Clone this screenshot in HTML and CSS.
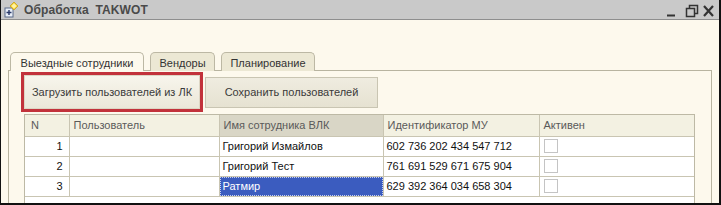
FILE: index.html
```html
<!DOCTYPE html>
<html lang="ru">
<head>
<meta charset="utf-8">
<link rel="stylesheet" href="styles.css">
</head>
<body>
<div class="window">
  <div class="titlebar">
    <svg class="app-icon" width="18" height="18" viewBox="0 0 18 18">
      <rect x="3" y="7" width="8" height="9" fill="#e8eef8" stroke="#5a6a8a" stroke-width="1"/>
      <path d="M7 9 V14 M4.5 11.5 H9.5" stroke="#2a3a6a" stroke-width="1.4"/>
      <path d="M12 1 L16 5 L12 9 L8 5 Z" fill="#f6d43c" stroke="#c9a21a" stroke-width="0.8"/>
      <path d="M12 2.5 L14.5 5 L12 7.5 L9.5 5 Z" fill="#fff3a8"/>
    </svg>
    <div class="title">Обработка&nbsp;&nbsp;TAKWOT</div>
    <div class="winbtns">
      <svg width="56" height="18" viewBox="0 0 56 18">
        <path d="M4 14.5 H12" stroke="#333" stroke-width="2"/>
        <rect x="23.5" y="7.5" width="8" height="8" fill="none" stroke="#333" stroke-width="1.5"/>
        <path d="M26.5 7.5 V4.5 H34.5 V12.5 H31.5" fill="none" stroke="#333" stroke-width="1.5"/>
        <path d="M41 5 L50 15 M50 5 L41 15" stroke="#333" stroke-width="2.2"/>
      </svg>
    </div>
  </div>
  <div class="content">
    <div class="tabs">
      <div class="tab active">Выездные сотрудники</div>
      <div class="tab">Вендоры</div>
      <div class="tab">Планирование</div>
    </div>
    <div class="panel">
      <div class="toolbar">
        <div class="highlight">
          <div class="btn btn-load">Загрузить пользователей из ЛК</div>
        </div>
        <div class="btn btn-save">Сохранить пользователей</div>
      </div>
      <div class="grid">
        <table>
          <colgroup>
            <col class="c-n"><col class="c-user"><col class="c-name"><col class="c-id"><col class="c-act">
          </colgroup>
          <thead>
            <tr>
              <th>N</th>
              <th>Пользователь</th>
              <th class="sorted">Имя сотрудника ВЛК</th>
              <th>Идентификатор МУ</th>
              <th>Активен</th>
            </tr>
          </thead>
          <tbody>
            <tr>
              <td class="num">1</td><td></td><td>Григорий Измайлов</td><td>602 736 202 434 547 712</td><td><span class="check"></span></td>
            </tr>
            <tr>
              <td class="num">2</td><td></td><td>Григорий Тест</td><td>761 691 529 671 675 904</td><td><span class="check"></span></td>
            </tr>
            <tr>
              <td class="num">3</td><td></td><td class="selected"><span>Ратмир</span></td><td>629 392 364 034 658 304</td><td><span class="check"></span></td>
            </tr>
          </tbody>
        </table>
      </div>
    </div>
  </div>
</div>
</body>
</html>
```

FILE: styles.css
```css
* { box-sizing: border-box; }
html, body { margin: 0; padding: 0; }
body {
  width: 721px;
  height: 205px;
  overflow: hidden;
  font-family: "Liberation Sans", Arial, sans-serif;
  font-size: 11px;
  background: #fff;
}
.window {
  width: 721px;
  height: 205px;
  border-left: 1px solid #111;
  border-right: 2px solid #111;
  border-bottom: 2px solid #111;
  background: #fdf9ed;
  display: flex;
  flex-direction: column;
  overflow: hidden;
}
.titlebar {
  height: 20px;
  flex: none;
  background: #c9c9c9;
  border-bottom: 1px solid #8e8e8e;
  display: flex;
  align-items: center;
  padding-left: 1px;
}
.app-icon { flex: none; margin-right: 4px; }
.title {
  font-weight: bold;
  font-size: 12px;
  color: #4a4a4a;
  flex: 1;
  letter-spacing: 0.1px;
}
.winbtns { flex: none; display: flex; padding-top: 1px; }
.content {
  flex: 1;
  display: flex;
  flex-direction: column;
  padding: 32px 7px 0 7px;
  min-height: 0;
}
.tabs {
  display: flex;
  height: 19px;
  padding-left: 2px;
  gap: 6px;
  position: relative;
  z-index: 1;
  margin-bottom: -1px;
}
.tab {
  height: 19px;
  padding: 3px 10px 0 10px;
  border: 1px solid #bcb8a4;
  border-bottom: none;
  border-radius: 5px 5px 0 0;
  background: #ece8d4;
  color: #333;
  line-height: 14px;
  white-space: nowrap;
  text-align: center;
}
.tab:nth-child(2) { width: 65px; padding: 3px 0 0 0; }
.tab:nth-child(3) { width: 94px; padding: 3px 0 0 0; }
.tab.active {
  background: #fdf9ed;
  width: 134px;
  padding: 3px 0 0 0;
}
.panel {
  flex: 1;
  border: 1px solid #b8b4a0;
  border-bottom: none;
  width: 704px;
  padding: 1px 0 0 12px;
  display: flex;
  flex-direction: column;
  min-height: 0;
}
.toolbar {
  display: flex;
  align-items: center;
  height: 40px;
  flex: none;
}
.highlight {
  border: 3px solid #c2323b;
  width: 182px;
  height: 40px;
  display: flex;
}
.btn {
  display: flex;
  align-items: center;
  justify-content: center;
  color: #3a3a3a;
  white-space: nowrap;
  border: 1px solid #c9c5b2;
  background: linear-gradient(#f5f3e9, #e9e5d5);
}
.btn-load {
  width: 176px;
  height: 34px;
  border-color: #ddd6c4;
  background: linear-gradient(#f7f5ec, #ebe7d9);
}
.btn-save {
  width: 173px;
  height: 31px;
  margin-left: 2px;
  margin-top: 0;
  background: linear-gradient(#efece0, #e6e2d1);
}
.grid {
  flex: 1;
  margin-left: 3px;
  margin-top: 2px;
  width: 671px;
  border: 1px solid #bdb9a5;
  border-bottom: none;
  background: #fff;
}
table {
  border-collapse: collapse;
  table-layout: fixed;
  width: 669px;
}
.c-n { width: 44px; }
.c-user { width: 150px; }
.c-name { width: 164px; }
.c-id { width: 156px; }
.c-act { width: 155px; }
th {
  height: 21px;
  background: #f3f1e2;
  border: 1px solid #c9c5b2;
  border-top: none;
  color: #5a5a5a;
  font-weight: normal;
  text-align: left;
  padding: 0 0 0 4px;
  white-space: nowrap;
}
th:first-child { border-left: none; padding-left: 6px; }
th:last-child { border-right: none; }
th.sorted { background: #d9d6c6; }
td {
  height: 20px;
  border: 1px solid #c9c5b2;
  padding: 0 0 0 3px;
  color: #111;
  white-space: nowrap;
}
td:first-child { border-left: none; }
td:last-child { border-right: none; }
td.num { text-align: right; padding: 0 6px 0 0; }
td.selected { padding: 0; }
td.selected span {
  display: flex;
  align-items: center;
  height: 19px;
  background: #3b5cbf;
  color: #fff;
  border: 1px dotted #c8d0f0;
  padding-left: 2px;
}
.check {
  display: block;
  width: 14px;
  height: 14px;
  border: 1px solid #c4c4c4;
  background: #fff;
  margin-left: 1px;
}
```
